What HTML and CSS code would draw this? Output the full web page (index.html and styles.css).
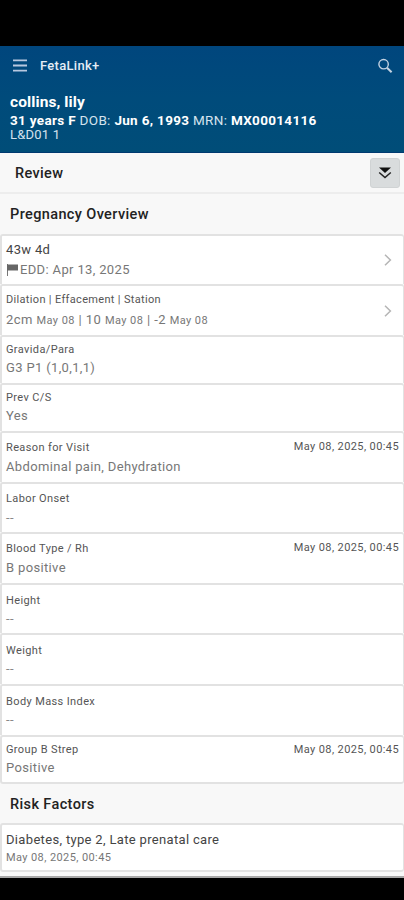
FILE: index.html
```
<!DOCTYPE html>
<html lang="en">
<head>
<meta charset="utf-8">
<title>FetaLink+</title>
<link rel="stylesheet" href="styles.css">
</head>
<body>
<div class="screen">
  <header class="header">
    <div class="appbar">
      <svg class="menu" viewBox="0 0 14 13" width="14" height="13"><path d="M0 1.3h14M0 6.5h14M0 11.7h14" stroke="#b7c8e0" stroke-width="1.8"/></svg>
      <span class="brand">FetaLink+</span>
      <svg class="search" viewBox="0 0 16 16" width="16" height="16" fill="none" stroke="#c3d2e2"><circle cx="6.6" cy="6.2" r="4.7" stroke-width="1.4"/><path d="M10 9.7l4.6 4.5" stroke-width="2"/></svg>
    </div>
    <div class="patient">
      <div class="name">collins, lily</div>
      <div class="facts"><b>31 years</b> <b>F</b> DOB: <b>Jun 6, 1993</b> MRN: <b>MX00014116</b></div>
      <div class="bed">L&amp;D01 1</div>
    </div>
  </header>
  <div class="review">
    <span>Review</span>
    <button class="expand" aria-label="Expand all"><svg viewBox="0 0 14 14" width="14" height="14"><path d="M1 1.5h12L7 7z" fill="#111"/><path d="M1.200 6.500L7 11.500l5.800-5" fill="none" stroke="#222" stroke-width="1.500"/></svg></button>
  </div>
  <h2 class="section overview">Pregnancy Overview</h2>
  <div class="cards">
    <div class="card"><div class="body"><div class="main">43w 4d</div><div class="value"><svg class="flag" viewBox="0 0 12 12" width="12" height="12"><path d="M1.500 0v12" stroke="#777" stroke-width="1"/><path d="M1 .5h11v6H1z" fill="#666"/></svg>EDD: Apr 13, 2025</div></div><svg class="chev" viewBox="0 0 8 12" width="8" height="12"><path d="M1 .8L6.400 6L1 11.200"/></svg></div>
    <div class="card"><div class="body"><div class="label dilation">Dilation | Effacement | Station</div><div class="value exam">2cm <small>May 08</small> | 10 <small>May 08</small> | -2 <small>May 08</small></div></div><svg class="chev" viewBox="0 0 8 12" width="8" height="12"><path d="M1 .8L6.400 6L1 11.200"/></svg></div>
    <div class="card short"><div class="body"><div class="label">Gravida/Para</div><div class="value">G3 P1 (1,0,1,1)</div></div></div>
    <div class="card short"><div class="body"><div class="label">Prev C/S</div><div class="value">Yes</div></div></div>
    <div class="card low"><div class="body"><div class="label">Reason for Visit</div><div class="value">Abdominal pain, Dehydration</div></div><time>May 08, 2025, 00:45</time></div>
    <div class="card low"><div class="body"><div class="label">Labor Onset</div><div class="value none">--</div></div></div>
    <div class="card low"><div class="body"><div class="label">Blood Type / Rh</div><div class="value">B positive</div></div><time>May 08, 2025, 00:45</time></div>
    <div class="card lower"><div class="body"><div class="label">Height</div><div class="value none">--</div></div></div>
    <div class="card lower"><div class="body"><div class="label">Weight</div><div class="value none">--</div></div></div>
    <div class="card lower"><div class="body"><div class="label">Body Mass Index</div><div class="value none">--</div></div></div>
    <div class="card short"><div class="body"><div class="label">Group B Strep</div><div class="value">Positive</div></div><time>May 08, 2025, 00:45</time></div>
  </div>
  <h2 class="section risks">Risk Factors</h2>
  <div class="card risk"><div class="body"><div class="main">Diabetes, type 2, Late prenatal care</div><div class="date">May 08, 2025, 00:45</div></div></div>
</div>
</body>
</html>
```
FILE: styles.css
```
* { box-sizing: border-box; }
body { margin: 0; background: #000; font-family: Roboto, "Liberation Sans", sans-serif; }
.screen { margin-top: 46px; height: 832px; background: #f8f8f8; border-bottom: 2px solid #a8a8a8; overflow: hidden; }
.header { height: 107px; background: linear-gradient(#00467d, #004b7b 50%, #004d78); border-bottom: 1px solid #003a70; color: #fff; }
.appbar { height: 39px; display: flex; align-items: center; padding: 0 11px 0 13px; }
.brand { margin-left: 13px; flex: 1; font-size: 13px; font-weight: 500; letter-spacing: .3px; color: #e4edf6; }
.patient { padding: 8px 10px 0; }
.name { font-size: 15.500px; line-height: 19px; font-weight: 700; letter-spacing: .1px; }
.facts { font-size: 13.500px; line-height: 17px; color: #d5e3ee; white-space: nowrap; letter-spacing: .32px; }
.facts b { color: #fff; }
.bed { font-size: 13px; line-height: 11px; letter-spacing: .2px; color: #d5e3ee; }
.review { height: 41px; display: flex; align-items: center; justify-content: space-between; padding: 0 4px 0 15px; border-bottom: 2px solid #ededed; font-size: 14.500px; font-weight: 500; color: #222; letter-spacing: .35px; }
.review span { padding-top: 2px; }
.expand { width: 30px; height: 30px; padding: 0; border: 1px solid #d0d3d4; border-radius: 3px; background: #d9dcdd; display: grid; place-items: center; }
.section { margin: 0; padding-left: 10px; font-size: 14.500px; font-weight: 500; letter-spacing: .38px; color: #222; height: 40px; line-height: 42px; }
.cards { display: grid; grid-template-rows: 50px 51px 48px 48px 51px 50px 51px 50px 51px 51px 49px; }
.card { background: #fff; border: 2px solid #e2e2e2; border-bottom: 0; border-right-width: 1px; border-radius: 3px 3px 0 0; padding: 5px 4px 0; display: flex; justify-content: space-between; }
.card.low { padding-top: 7px; }
.card.lower { padding-top: 8px; }
.card:last-child { border-bottom: 2px solid #e2e2e2; border-radius: 3px; }
.label { font-size: 11px; line-height: 16px; color: #555; letter-spacing: .38px; }
.dilation { padding-top: 1px; letter-spacing: .33px; }
.main { font-size: 13px; line-height: 17px; color: #444; letter-spacing: .33px; }
.value { font-size: 13px; line-height: 20px; margin-top: 2px; color: #777; letter-spacing: .35px; }
.main + .value { margin-top: 2px; }
.short .value { margin-top: 0; }
.low .value, .lower .value { margin-top: 0; }
.low .value { margin-top: 1px; }
.value small { font-size: 11px; }
.exam { letter-spacing: .43px; }
.flag { vertical-align: -2px; margin-right: 2px; }
.none { color: #888; }
.chev { align-self: center; margin: 0 7px 5px 0; fill: none; stroke: #b5b5b5; stroke-width: 1.500; }
time { font-size: 11px; line-height: 14px; color: #555; letter-spacing: .4px; }
.short time { padding-top: 1px; }
.risks { height: 39px; line-height: 42px; }
.risk { height: 49px; }
.risk .main { padding-top: 1px; }
.date { font-size: 11px; line-height: 18px; padding-top: 1px; color: #777; letter-spacing: .4px; }
```
